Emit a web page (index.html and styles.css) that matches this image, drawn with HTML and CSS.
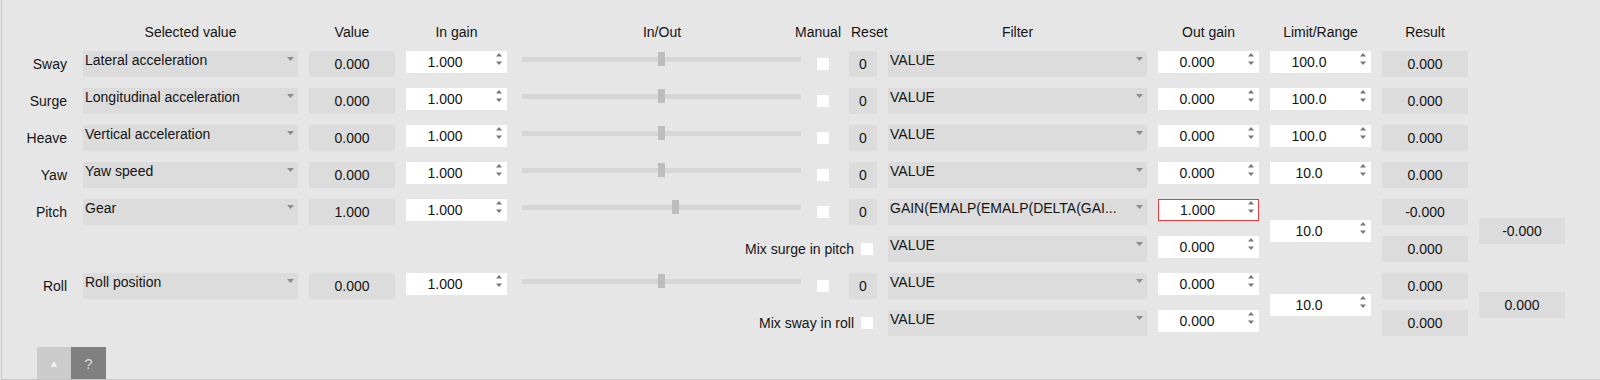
FILE: index.html
```html
<!DOCTYPE html>
<html>
<head>
<meta charset="utf-8">
<link rel="stylesheet" href="styles.css">
</head>
<body>
<div class="panel">
  <div class="head">
    <div class="h c2">Selected value</div>
    <div class="h c3">Value</div>
    <div class="h c4">In gain</div>
    <div class="h c5">In/Out</div>
    <div class="h h-manual">Manual</div>
    <div class="h h-reset">Reset</div>
    <div class="h c8">Filter</div>
    <div class="h c9">Out gain</div>
    <div class="h c10">Limit/Range</div>
    <div class="h c11">Result</div>
  </div>

  <div class="grid">
    <!-- Sway -->
    <div class="lbl">Sway</div>
    <div class="combo"><span>Lateral acceleration</span><svg class="dd" width="7" height="4" viewBox="0 0 7 4"><polygon points="0,0 7,0 3.5,4"/></svg></div>
    <div class="box">0.000</div>
    <div class="spin"><span>1.000</span><svg class="sa" width="6" height="12" viewBox="0 0 6 12"><polygon points="0,3.5 3,0 6,3.5"/><polygon points="0,8.5 6,8.5 3,12"/></svg></div>
    <div class="slider"><div class="track"></div><div class="thumb" style="--p:0.5"></div></div>
    <div class="chkcell"><div class="chk"></div></div>
    <div class="box">0</div>
    <div class="combo"><span>VALUE</span><svg class="dd" width="7" height="4" viewBox="0 0 7 4"><polygon points="0,0 7,0 3.5,4"/></svg></div>
    <div class="spin"><span>0.000</span><svg class="sa" width="6" height="12" viewBox="0 0 6 12"><polygon points="0,3.5 3,0 6,3.5"/><polygon points="0,8.5 6,8.5 3,12"/></svg></div>
    <div class="spin"><span>100.0</span><svg class="sa" width="6" height="12" viewBox="0 0 6 12"><polygon points="0,3.5 3,0 6,3.5"/><polygon points="0,8.5 6,8.5 3,12"/></svg></div>
    <div class="box">0.000</div>

    <!-- Surge -->
    <div class="lbl">Surge</div>
    <div class="combo"><span>Longitudinal acceleration</span><svg class="dd" width="7" height="4" viewBox="0 0 7 4"><polygon points="0,0 7,0 3.5,4"/></svg></div>
    <div class="box">0.000</div>
    <div class="spin"><span>1.000</span><svg class="sa" width="6" height="12" viewBox="0 0 6 12"><polygon points="0,3.5 3,0 6,3.5"/><polygon points="0,8.5 6,8.5 3,12"/></svg></div>
    <div class="slider"><div class="track"></div><div class="thumb" style="--p:0.5"></div></div>
    <div class="chkcell"><div class="chk"></div></div>
    <div class="box">0</div>
    <div class="combo"><span>VALUE</span><svg class="dd" width="7" height="4" viewBox="0 0 7 4"><polygon points="0,0 7,0 3.5,4"/></svg></div>
    <div class="spin"><span>0.000</span><svg class="sa" width="6" height="12" viewBox="0 0 6 12"><polygon points="0,3.5 3,0 6,3.5"/><polygon points="0,8.5 6,8.5 3,12"/></svg></div>
    <div class="spin"><span>100.0</span><svg class="sa" width="6" height="12" viewBox="0 0 6 12"><polygon points="0,3.5 3,0 6,3.5"/><polygon points="0,8.5 6,8.5 3,12"/></svg></div>
    <div class="box">0.000</div>

    <!-- Heave -->
    <div class="lbl">Heave</div>
    <div class="combo"><span>Vertical acceleration</span><svg class="dd" width="7" height="4" viewBox="0 0 7 4"><polygon points="0,0 7,0 3.5,4"/></svg></div>
    <div class="box">0.000</div>
    <div class="spin"><span>1.000</span><svg class="sa" width="6" height="12" viewBox="0 0 6 12"><polygon points="0,3.5 3,0 6,3.5"/><polygon points="0,8.5 6,8.5 3,12"/></svg></div>
    <div class="slider"><div class="track"></div><div class="thumb" style="--p:0.5"></div></div>
    <div class="chkcell"><div class="chk"></div></div>
    <div class="box">0</div>
    <div class="combo"><span>VALUE</span><svg class="dd" width="7" height="4" viewBox="0 0 7 4"><polygon points="0,0 7,0 3.5,4"/></svg></div>
    <div class="spin"><span>0.000</span><svg class="sa" width="6" height="12" viewBox="0 0 6 12"><polygon points="0,3.5 3,0 6,3.5"/><polygon points="0,8.5 6,8.5 3,12"/></svg></div>
    <div class="spin"><span>100.0</span><svg class="sa" width="6" height="12" viewBox="0 0 6 12"><polygon points="0,3.5 3,0 6,3.5"/><polygon points="0,8.5 6,8.5 3,12"/></svg></div>
    <div class="box">0.000</div>

    <!-- Yaw -->
    <div class="lbl">Yaw</div>
    <div class="combo"><span>Yaw speed</span><svg class="dd" width="7" height="4" viewBox="0 0 7 4"><polygon points="0,0 7,0 3.5,4"/></svg></div>
    <div class="box">0.000</div>
    <div class="spin"><span>1.000</span><svg class="sa" width="6" height="12" viewBox="0 0 6 12"><polygon points="0,3.5 3,0 6,3.5"/><polygon points="0,8.5 6,8.5 3,12"/></svg></div>
    <div class="slider"><div class="track"></div><div class="thumb" style="--p:0.5"></div></div>
    <div class="chkcell"><div class="chk"></div></div>
    <div class="box">0</div>
    <div class="combo"><span>VALUE</span><svg class="dd" width="7" height="4" viewBox="0 0 7 4"><polygon points="0,0 7,0 3.5,4"/></svg></div>
    <div class="spin"><span>0.000</span><svg class="sa" width="6" height="12" viewBox="0 0 6 12"><polygon points="0,3.5 3,0 6,3.5"/><polygon points="0,8.5 6,8.5 3,12"/></svg></div>
    <div class="spin"><span>10.0</span><svg class="sa" width="6" height="12" viewBox="0 0 6 12"><polygon points="0,3.5 3,0 6,3.5"/><polygon points="0,8.5 6,8.5 3,12"/></svg></div>
    <div class="box">0.000</div>

    <!-- Pitch -->
    <div class="lbl">Pitch</div>
    <div class="combo"><span>Gear</span><svg class="dd" width="7" height="4" viewBox="0 0 7 4"><polygon points="0,0 7,0 3.5,4"/></svg></div>
    <div class="box">1.000</div>
    <div class="spin"><span>1.000</span><svg class="sa" width="6" height="12" viewBox="0 0 6 12"><polygon points="0,3.5 3,0 6,3.5"/><polygon points="0,8.5 6,8.5 3,12"/></svg></div>
    <div class="slider"><div class="track"></div><div class="thumb" style="--p:0.552"></div></div>
    <div class="chkcell"><div class="chk"></div></div>
    <div class="box">0</div>
    <div class="combo"><span>GAIN(EMALP(EMALP(DELTA(GAI...</span><svg class="dd" width="7" height="4" viewBox="0 0 7 4"><polygon points="0,0 7,0 3.5,4"/></svg></div>
    <div class="spin err"><span>1.000</span><svg class="sa" width="6" height="12" viewBox="0 0 6 12"><polygon points="0,3.5 3,0 6,3.5"/><polygon points="0,8.5 6,8.5 3,12"/></svg></div>
    <div class="spin span2"><span>10.0</span><svg class="sa" width="6" height="12" viewBox="0 0 6 12"><polygon points="0,3.5 3,0 6,3.5"/><polygon points="0,8.5 6,8.5 3,12"/></svg></div>
    <div class="box">-0.000</div>
    <div class="box span2">-0.000</div>

    <!-- Mix surge in pitch -->
    <div class="mix"><span>Mix surge in pitch</span><div class="chk"></div></div>
    <div class="combo"><span>VALUE</span><svg class="dd" width="7" height="4" viewBox="0 0 7 4"><polygon points="0,0 7,0 3.5,4"/></svg></div>
    <div class="spin"><span>0.000</span><svg class="sa" width="6" height="12" viewBox="0 0 6 12"><polygon points="0,3.5 3,0 6,3.5"/><polygon points="0,8.5 6,8.5 3,12"/></svg></div>
    <div class="box">0.000</div>

    <!-- Roll -->
    <div class="lbl">Roll</div>
    <div class="combo"><span>Roll position</span><svg class="dd" width="7" height="4" viewBox="0 0 7 4"><polygon points="0,0 7,0 3.5,4"/></svg></div>
    <div class="box">0.000</div>
    <div class="spin"><span>1.000</span><svg class="sa" width="6" height="12" viewBox="0 0 6 12"><polygon points="0,3.5 3,0 6,3.5"/><polygon points="0,8.5 6,8.5 3,12"/></svg></div>
    <div class="slider"><div class="track"></div><div class="thumb" style="--p:0.5"></div></div>
    <div class="chkcell"><div class="chk"></div></div>
    <div class="box">0</div>
    <div class="combo"><span>VALUE</span><svg class="dd" width="7" height="4" viewBox="0 0 7 4"><polygon points="0,0 7,0 3.5,4"/></svg></div>
    <div class="spin"><span>0.000</span><svg class="sa" width="6" height="12" viewBox="0 0 6 12"><polygon points="0,3.5 3,0 6,3.5"/><polygon points="0,8.5 6,8.5 3,12"/></svg></div>
    <div class="spin span2"><span>10.0</span><svg class="sa" width="6" height="12" viewBox="0 0 6 12"><polygon points="0,3.5 3,0 6,3.5"/><polygon points="0,8.5 6,8.5 3,12"/></svg></div>
    <div class="box">0.000</div>
    <div class="box span2">0.000</div>

    <!-- Mix sway in roll -->
    <div class="mix"><span>Mix sway in roll</span><div class="chk"></div></div>
    <div class="combo"><span>VALUE</span><svg class="dd" width="7" height="4" viewBox="0 0 7 4"><polygon points="0,0 7,0 3.5,4"/></svg></div>
    <div class="spin"><span>0.000</span><svg class="sa" width="6" height="12" viewBox="0 0 6 12"><polygon points="0,3.5 3,0 6,3.5"/><polygon points="0,8.5 6,8.5 3,12"/></svg></div>
    <div class="box">0.000</div>
  </div>

  <div class="btns">
    <div class="btn btn-up">&#9650;</div>
    <div class="btn btn-help">?</div>
  </div>
</div>
</body>
</html>
```

FILE: styles.css
```css
html, body {
  margin: 0;
  padding: 0;
  background: #e6e6e6;
}
body {
  font-family: "Liberation Sans", Arial, sans-serif;
  font-size: 14px;
  color: #141414;
}
.panel {
  margin-left: 1px;
  height: 379px;
  border-left: 1px solid #c4c4c4;
  border-bottom: 1px solid #c4c4c4;
  display: flex;
  flex-direction: column;
}
.head, .grid {
  display: grid;
  grid-template-columns: 70px 215px 86px 101px 288px 21px 28px 259px 101px 101px 86px 86px;
  column-gap: 11px;
}
.head {
  height: 40px;
  margin-bottom: 11px;
  align-items: end;
}
.h {
  grid-row: 1;
  text-align: center;
  line-height: 16px;
  white-space: nowrap;
}
.c2 { grid-column: 2; }
.c3 { grid-column: 3; }
.c4 { grid-column: 4; }
.c5 { grid-column: 5; }
.c8 { grid-column: 8; }
.c9 { grid-column: 9; }
.c10 { grid-column: 10; }
.c11 { grid-column: 11; }
.h-manual {
  grid-column: 5 / 7;
  text-align: right;
  margin-right: -3px;
}
.h-reset {
  grid-column: 7 / 9;
  justify-self: start;
  margin-left: 2px;
}
.grid {
  grid-auto-rows: 26px;
  row-gap: 11px;
}
.lbl {
  grid-column: 1;
  display: flex;
  align-items: center;
  justify-content: flex-end;
  padding-right: 5px;
}
.combo {
  background: #dcdcdc;
  display: flex;
  justify-content: space-between;
  padding: 1px 4px 0 2px;
  line-height: 16px;
  white-space: nowrap;
  overflow: hidden;
}
.combo .dd {
  fill: #8c8c8c;
  margin-top: 5px;
  flex: none;
}
.box {
  background: #dcdcdc;
  display: flex;
  align-items: center;
  justify-content: center;
}
.spin {
  background: #fff;
  height: 22px;
  box-sizing: border-box;
  display: flex;
  align-items: flex-start;
  padding-right: 5px;
}
.spin span {
  flex: 1;
  text-align: center;
  line-height: 22px;
  padding-right: 12px;
}
.spin .sa {
  fill: #767676;
  margin-top: 2px;
  flex: none;
}
.spin.err {
  border: 1px solid #ec3a3a;
  padding-right: 4px;
}
.spin.err span { line-height: 20px; }
.spin.err .sa { margin-top: 1px; }
.span2 {
  grid-row: span 2;
  align-self: center;
}
.box.span2 { height: 26px; }
.slider {
  position: relative;
  height: 14px;
  margin: 1px 5px 0 4px;
}
.track {
  height: 5px;
  margin-top: 5px;
  background: #d6d6d6;
}
.thumb {
  position: absolute;
  top: 0;
  left: calc((100% - 7px) * var(--p));
  width: 7px;
  height: 14px;
  background: #bdbdbd;
}
.chkcell {
  display: flex;
  align-items: center;
}
.chk {
  width: 12px;
  height: 12px;
  background: #fff;
  flex: none;
}
.mix {
  grid-column: 5 / 8;
  display: flex;
  align-items: center;
  justify-content: flex-end;
  gap: 7px;
  padding-right: 4px;
  white-space: nowrap;
}
.btns {
  display: flex;
  padding-left: 35px;
  margin-top: 11px;
  flex: 1;
}
.btn {
  display: flex;
  align-items: center;
  justify-content: center;
}
.btn-up {
  width: 34px;
  background: #cccccc;
  color: #f4f4f4;
  font-size: 10px;
}
.btn-help {
  width: 35px;
  background: #808080;
  color: #d8d8d8;
  font-size: 15px;
}
```
